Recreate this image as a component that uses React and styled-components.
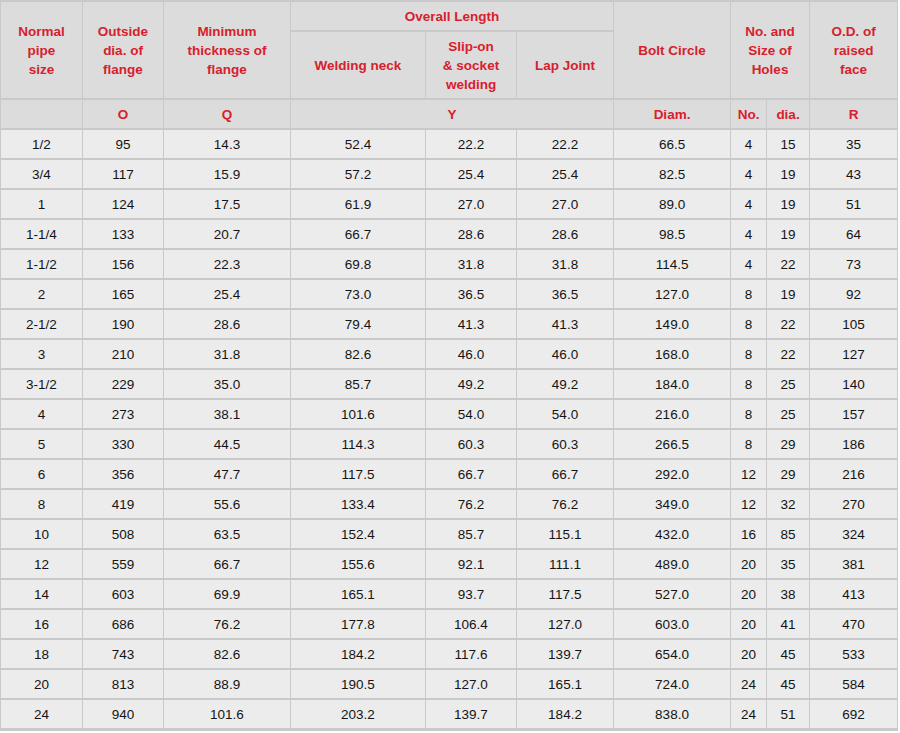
import React from 'react';
import styled, { createGlobalStyle } from 'styled-components';

const GlobalStyle = createGlobalStyle`
  body {
    margin: 0;
    background: #ffffff;
    font-family: "Liberation Sans", Arial, sans-serif;
  }
`;

const Table = styled.table`
  width: 898px;
  border-collapse: separate;
  border-spacing: 1px 2px;
  background: #c9c9c9;
  table-layout: fixed;
  border-bottom: 1px solid #c9c9c9;
  font-family: "Liberation Sans", Arial, sans-serif;
  font-size: 13px;
`;

const HeadCell = styled.th`
  background: #dcdcdc;
  color: #d8202c;
  font-weight: bold;
  font-size: 13.5px;
  text-align: center;
  vertical-align: middle;
  padding: 0 2px;
  line-height: 19px;
  height: ${(p) => p.$h || 28}px;
`;

const Cell = styled.td`
  background: #ececec;
  color: #141414;
  font-size: 13.5px;
  text-align: center;
  vertical-align: middle;
  height: 28px;
  padding: 0;
`;

const widths = [81, 80, 126, 134, 90, 96, 116, 35, 42, 87];

const rows = [
  ['1/2', '95', '14.3', '52.4', '22.2', '22.2', '66.5', '4', '15', '35'],
  ['3/4', '117', '15.9', '57.2', '25.4', '25.4', '82.5', '4', '19', '43'],
  ['1', '124', '17.5', '61.9', '27.0', '27.0', '89.0', '4', '19', '51'],
  ['1-1/4', '133', '20.7', '66.7', '28.6', '28.6', '98.5', '4', '19', '64'],
  ['1-1/2', '156', '22.3', '69.8', '31.8', '31.8', '114.5', '4', '22', '73'],
  ['2', '165', '25.4', '73.0', '36.5', '36.5', '127.0', '8', '19', '92'],
  ['2-1/2', '190', '28.6', '79.4', '41.3', '41.3', '149.0', '8', '22', '105'],
  ['3', '210', '31.8', '82.6', '46.0', '46.0', '168.0', '8', '22', '127'],
  ['3-1/2', '229', '35.0', '85.7', '49.2', '49.2', '184.0', '8', '25', '140'],
  ['4', '273', '38.1', '101.6', '54.0', '54.0', '216.0', '8', '25', '157'],
  ['5', '330', '44.5', '114.3', '60.3', '60.3', '266.5', '8', '29', '186'],
  ['6', '356', '47.7', '117.5', '66.7', '66.7', '292.0', '12', '29', '216'],
  ['8', '419', '55.6', '133.4', '76.2', '76.2', '349.0', '12', '32', '270'],
  ['10', '508', '63.5', '152.4', '85.7', '115.1', '432.0', '16', '85', '324'],
  ['12', '559', '66.7', '155.6', '92.1', '111.1', '489.0', '20', '35', '381'],
  ['14', '603', '69.9', '165.1', '93.7', '117.5', '527.0', '20', '38', '413'],
  ['16', '686', '76.2', '177.8', '106.4', '127.0', '603.0', '20', '41', '470'],
  ['18', '743', '82.6', '184.2', '117.6', '139.7', '654.0', '20', '45', '533'],
  ['20', '813', '88.9', '190.5', '127.0', '165.1', '724.0', '24', '45', '584'],
  ['24', '940', '101.6', '203.2', '139.7', '184.2', '838.0', '24', '51', '692'],
];

function App() {
  return (
    <>
      <GlobalStyle />
      <Table>
        <colgroup>
          {widths.map((w, i) => (
            <col key={i} style={{ width: w }} />
          ))}
        </colgroup>
        <thead>
          <tr>
            <HeadCell rowSpan={2}>Normal<br />pipe<br />size</HeadCell>
            <HeadCell rowSpan={2}>Outside<br />dia. of<br />flange</HeadCell>
            <HeadCell rowSpan={2}>Minimum<br />thickness of<br />flange</HeadCell>
            <HeadCell colSpan={3}>Overall Length</HeadCell>
            <HeadCell rowSpan={2}>Bolt Circle</HeadCell>
            <HeadCell rowSpan={2} colSpan={2}>No. and<br />Size of<br />Holes</HeadCell>
            <HeadCell rowSpan={2}>O.D. of<br />raised<br />face</HeadCell>
          </tr>
          <tr>
            <HeadCell $h={66}>Welding neck</HeadCell>
            <HeadCell $h={66}>Slip-on<br />&amp; socket<br />welding</HeadCell>
            <HeadCell $h={66}>Lap Joint</HeadCell>
          </tr>
          <tr>
            <HeadCell></HeadCell>
            <HeadCell>O</HeadCell>
            <HeadCell>Q</HeadCell>
            <HeadCell colSpan={3}>Y</HeadCell>
            <HeadCell>Diam.</HeadCell>
            <HeadCell>No.</HeadCell>
            <HeadCell>dia.</HeadCell>
            <HeadCell>R</HeadCell>
          </tr>
        </thead>
        <tbody>
          {rows.map((r, i) => (
            <tr key={i}>
              {r.map((v, j) => (
                <Cell key={j}>{v}</Cell>
              ))}
            </tr>
          ))}
        </tbody>
      </Table>
    </>
  );
}

export default App;
